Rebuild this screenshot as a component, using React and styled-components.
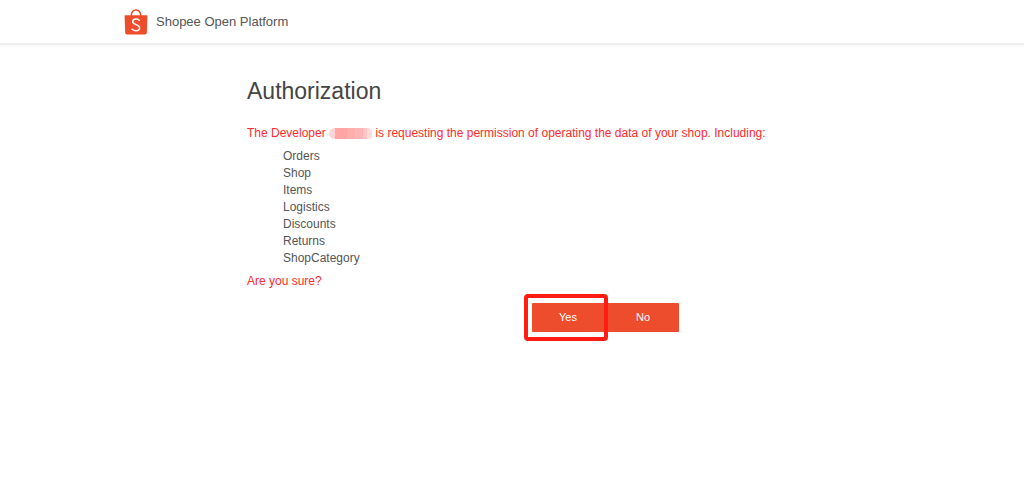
import React from "react";
import styled, { createGlobalStyle } from "styled-components";

const GlobalStyle = createGlobalStyle`
  *, *::before, *::after { box-sizing: border-box; }
  body {
    margin: 0;
    background: #fff;
    color: #555;
    font-family: "Liberation Sans", Arial, sans-serif;
    font-size: 12px;
    line-height: 17px;
  }
`;

const Header = styled.header`
  border-bottom: 2px solid #f0f0f0;
  box-shadow: 0 1px 2px #f6f6f6;
`;

const HeaderInner = styled.div`
  display: flex;
  align-items: center;
  gap: 8px;
  max-width: 776px;
  height: 43px;
  margin: 0 auto;
`;

const Logo = styled.svg`
  display: block;
  width: 24px;
  height: 26px;
`;

const Brand = styled.span`
  font-size: 13px;
`;

const Main = styled.main`
  max-width: 530px;
  margin: 0 auto;
  padding: 32px 0;
`;

const Title = styled.h1`
  margin: 0 0 20px;
  font-size: 23px;
  font-weight: 400;
  line-height: 28px;
  color: #444;
`;

const Notice = styled.p`
  margin: 0;
  color: #ff2a2a;
  white-space: nowrap;
`;

const Redacted = styled.span`
  display: inline-block;
  width: 43px;
  height: 11px;
  border-radius: 6px 4px 3px 6px;
  vertical-align: -2px;
  background: linear-gradient(
    90deg,
    #ffd5d5 0 6px,
    #ffa5a5 6px 18px,
    #ffadad 18px 26px,
    #ffb5b5 26px 34px,
    #ffc4c4 34px 38px,
    #ffdcdc 38px
  );
`;

const ScopeList = styled.ul`
  margin: 6px 0;
  padding: 0 0 0 36px;
  list-style: none;
`;

const Actions = styled.div`
  display: flex;
  justify-content: flex-end;
  gap: 3px;
  margin-top: 13px;
  padding-right: 98px;
`;

const Highlight = styled.div`
  position: relative;

  &::after {
    content: "";
    position: absolute;
    inset: -9px -4px -9px -8px;
    border: 4px solid #ff1c12;
    border-radius: 4px;
    pointer-events: none;
  }
`;

const Button = styled.button`
  display: block;
  width: 72px;
  height: 29px;
  padding: 0;
  border: 0;
  border-radius: 1px;
  background: #ee4d2d;
  color: #fff;
  font: inherit;
  font-size: 11px;
  cursor: pointer;

  ${Highlight} & {
    width: 75px;
    margin-right: -3px;
    padding-right: 3px;
  }
`;

const scopes = ["Orders", "Shop", "Items", "Logistics", "Discounts", "Returns", "ShopCategory"];

function ShopeeLogo() {
  return (
    <Logo viewBox="0 0 24 26" aria-hidden="true">
      <path d="M7.2 7C7.4 3.4 9.3 1.1 12 1.1S16.6 3.4 16.8 7" fill="none" stroke="#ee4d2d" strokeWidth="1.5" />
      <path d="M1.2 6.3h21.6q.7 0 .6.8l-.5 16.4q-.2 1.9-2 2H3.1q-1.8-.1-2-2L.6 7.1q-.1-.8.6-.8z" fill="#ee4d2d" />
      <path
        d="M15.4 11.3c-1-.8-2.1-1.2-3.4-1.2-2 0-3.3 1-3.3 2.6 0 3.4 6.9 2.4 6.9 6.1 0 1.9-1.5 3-3.6 3-1.5 0-2.9-.6-3.9-1.5"
        fill="none"
        stroke="#fff"
        strokeWidth="1.5"
        strokeLinecap="round"
      />
    </Logo>
  );
}

export default function App() {
  return (
    <>
      <GlobalStyle />
      <Header>
        <HeaderInner>
          <ShopeeLogo />
          <Brand>Shopee Open Platform</Brand>
        </HeaderInner>
      </Header>
      <Main>
        <Title>Authorization</Title>
        <Notice>
          The Developer <Redacted /> is requesting the permission of operating the data of your shop. Including:
        </Notice>
        <ScopeList>
          {scopes.map((scope) => (
            <li key={scope}>{scope}</li>
          ))}
        </ScopeList>
        <Notice>Are you sure?</Notice>
        <Actions>
          <Highlight>
            <Button type="button">Yes</Button>
          </Highlight>
          <Button type="button">No</Button>
        </Actions>
      </Main>
    </>
  );
}
